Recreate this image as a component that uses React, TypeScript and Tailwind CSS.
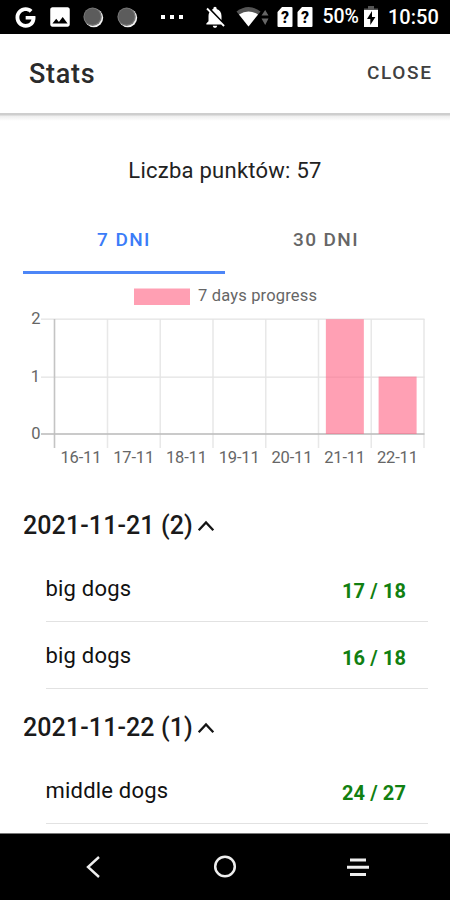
import React from "react";
import { MdImage, MdNotificationsOff } from "react-icons/md";
import { FaGoogle } from "react-icons/fa";

function SimCard() {
  return (
    <svg width="16" height="20" viewBox="0 0 16 20" className="shrink-0">
      <path d="M5 0H14.5Q15.5 0 15.5 1V19Q15.5 20 14.5 20H1.5Q.5 20 .5 19V5Z" fill="#fff" />
      <text x="8" y="16" textAnchor="middle" fontFamily="Roboto, sans-serif" fontSize="16" fontWeight="800" fill="#000">?</text>
    </svg>
  );
}

function Coin() {
  return (
    <svg width="21" height="21" viewBox="0 0 21 21" className="shrink-0">
      <circle cx="10.8" cy="10.8" r="9.4" fill="#f4f4f4" />
      <circle cx="9.6" cy="9.7" r="9.2" fill="#777" />
      <circle cx="9.4" cy="9.5" r="8" fill="#5c5c5c" />
    </svg>
  );
}

function StatusBar() {
  return (
    <div className="flex h-[34px] shrink-0 items-center bg-black text-white">
      <FaGoogle className="ml-[15px] h-[21px] w-[21px] shrink-0" />
      <MdImage className="ml-[10.5px] h-[26px] w-[26px] shrink-0" />
      <div className="ml-[10px] flex gap-[13px]"><Coin /><Coin /></div>
      <div className="ml-[23px] flex gap-[5px]">
        <i className="h-[4px] w-[4px] bg-white" />
        <i className="h-[4px] w-[4px] bg-white" />
        <i className="h-[4px] w-[4px] bg-white" />
      </div>
      <MdNotificationsOff className="ml-[19px] h-[26px] w-[26px] shrink-0" />
      <svg width="34" height="22" viewBox="0 0 34 22" className="ml-[8px] shrink-0">
        <path d="M.5 5.5Q12.5-3.5 24.5 5.5L12.5 20.5Z" fill="#555" />
        <path d="M3 8.5Q12.5 2.5 22 8.5L12.5 20.5Z" fill="#fff" />
        <path d="M25.5 9.5L29.2 4L32.5 9.5ZM25.5 12.5H32.5L29.2 19Z" fill="#666" />
      </svg>
      <div className="ml-[7.5px] flex gap-[3.5px]"><SimCard /><SimCard /></div>
      <span className="ml-[10px] w-[38px] whitespace-nowrap font-medium text-[19.5px] leading-[36px] tracking-[-0.1px]">50%</span>
      <svg width="14" height="22" viewBox="0 0 14 22" className="ml-[3.5px] shrink-0">
        <path d="M0 4V2.5H4V0H10V2.5H14V4Z" fill="#555" />
        <path d="M0 4H14V21H0Z" fill="#fff" />
        <path d="M8 5L3 13H6.3V19L11.4 11H8Z" fill="#000" />
      </svg>
      <span className="ml-[10px] whitespace-nowrap font-medium text-[20px] leading-[36px]">10:50</span>
    </div>
  );
}

const days = [
  { label: "16-11", value: 0 },
  { label: "17-11", value: 0 },
  { label: "18-11", value: 0 },
  { label: "19-11", value: 0 },
  { label: "20-11", value: 0 },
  { label: "21-11", value: 2 },
  { label: "22-11", value: 1 },
];
const STEP = 52.75;
const LEFT = 54.5;

function ProgressChart() {
  return (
    <svg width="450" height="206" viewBox="0 274 450 206" className="block shrink-0" fontFamily="Roboto, sans-serif" fontSize="16.5" fill="#666">
      <rect x="134" y="288.5" width="56" height="16.5" fill="#ff9fb3" />
      <text x="198" y="301.4" textLength="119">7 days progress</text>
      {days.map((d, i) => (
        <rect key={d.label} x={LEFT + STEP * (i + 1) - 0.5} y="319" width="1.5" height="129" fill="#e8e8e8" />
      ))}
      <rect x="41" y="318.5" width="383.5" height="1.3" fill="#e4e4e4" />
      <rect x="41" y="376.5" width="383.5" height="1.3" fill="#e4e4e4" />
      <rect x="53.7" y="319" width="1.6" height="129" fill="#c4c4c4" />
      <rect x="41" y="433.2" width="383.5" height="1.6" fill="#bdbdbd" />
      {days.map((d, i) => (
        <g key={d.label}>
          {d.value > 0 && (
            <rect x={LEFT + STEP * i + 7.6} y={434 - d.value * 57.4} width="38" height={d.value * 57.4} fill="#ff6384" fillOpacity=".61" />
          )}
          <text x={LEFT + STEP * i + 6} y="463.4" textLength="41">{d.label}</text>
        </g>
      ))}
      <text x="40.5" y="324" textAnchor="end">2</text>
      <text x="40" y="382" textAnchor="end">1</text>
      <text x="40.5" y="439.2" textAnchor="end">0</text>
    </svg>
  );
}

function DayHeading({ children }: { children: React.ReactNode }) {
  return (
    <div className="flex h-[68px] shrink-0 items-center pl-[23px] pt-[9px] text-[25px] font-medium tracking-[0.1px] text-[#1a1a1a]">
      <span className="w-[170px] whitespace-nowrap">{children}</span>
      <svg width="18" height="12" viewBox="0 0 18 12" className="ml-[4px]">
        <path d="M1.7 10.3L9 2.5L16.3 10.3" fill="none" stroke="#151515" strokeWidth="2.3" />
      </svg>
    </div>
  );
}

function ResultRow({ name, score }: { name: string; score: string }) {
  return (
    <div className="ml-[45.5px] mr-[22px] flex h-[67px] shrink-0 items-center justify-between border-b-[1.5px] border-[#e2e2e2] pr-[22px]">
      <span className="text-[22px] tracking-[0.2px] text-[#111]">{name}</span>
      <span className="pt-[5px] text-[20px] font-bold tracking-[0.1px] text-[#118011]">{score}</span>
    </div>
  );
}

export default function App() {
  return (
    <div className="flex h-[900px] w-[450px] flex-col overflow-hidden bg-white font-['Roboto',sans-serif]">
      <StatusBar />
      <header className="flex h-[79px] shrink-0 items-center justify-between pl-[29px] pr-[17.5px]">
        <h1 className="pt-[2px] text-[27px] font-medium tracking-[0.7px] text-[#2b2b2b]">Stats</h1>
        <button className="text-[19px] font-medium tracking-[1.6px] text-[#404040]">CLOSE</button>
      </header>
      <div className="h-[8px] shrink-0 bg-[linear-gradient(#cecece_0px,#cecece_2px,#eee_3px,#fff_8px)]" />
      <p className="h-[84px] shrink-0 pt-[16px] text-center text-[22px] leading-[68px] tracking-[0.25px] text-[#222]">Liczba punktów: 57</p>
      <div className="mx-[23px] flex h-[69px] shrink-0 text-[19px] font-medium tracking-[1.4px]">
        <div className="flex flex-1 items-center justify-center border-b-3 border-[#4d86f7] pt-[5px] text-[#3b7cf8]">7 DNI</div>
        <div className="flex flex-1 items-center justify-center border-b-3 border-transparent pt-[5px] text-[#666]">30 DNI</div>
      </div>
      <ProgressChart />
      <main className="flex min-h-0 flex-1 flex-col overflow-hidden pt-[7px]">
        <DayHeading>2021-11-21 (2)</DayHeading>
        <ResultRow name="big dogs" score="17 / 18" />
        <ResultRow name="big dogs" score="16 / 18" />
        <DayHeading>2021-11-22 (1)</DayHeading>
        <ResultRow name="middle dogs" score="24 / 27" />
      </main>
      <nav className="h-[67px] shrink-0 border-t border-[#777] bg-black">
        <svg width="450" height="66" viewBox="0 834 450 66" fill="none" stroke="#eee">
          <path d="M99 857L88 867L99 877" strokeWidth="2.4" />
          <circle cx="225" cy="866.5" r="9.8" strokeWidth="2.5" />
          <path d="M350 860H366M347 867.2H369M350 874.6H366" strokeWidth="3" />
        </svg>
      </nav>
    </div>
  );
}
